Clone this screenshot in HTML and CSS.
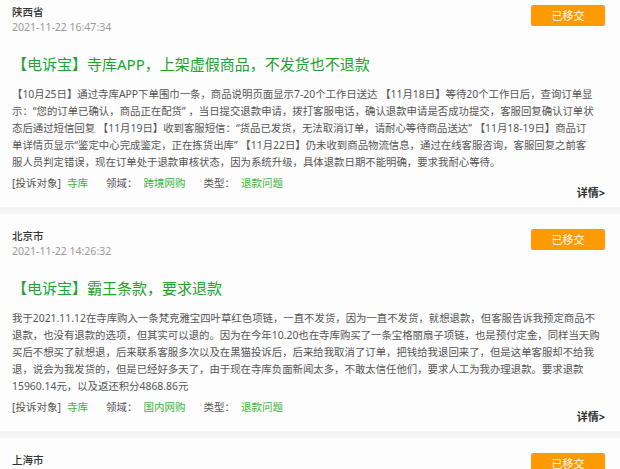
FILE: index.html
```html
<!DOCTYPE html>
<html lang="zh-CN">
<head>
<meta charset="utf-8">
<title>投诉列表</title>
<link rel="stylesheet" href="styles.css">
</head>
<body>
<div class="list">
  <div class="card">
    <div class="head">
      <div class="meta">
        <div class="loc">陕西省</div>
        <div class="date">2021-11-22 16:47:34</div>
      </div>
      <div class="btn">已移交</div>
    </div>
    <div class="title">【电诉宝】寺库APP，上架虚假商品，不发货也不退款</div>
    <div class="text">
      <span class="ln">【10月25日】通过寺库APP下单围巾一条，商品说明页面显示7-20个工作日送达 【11月18日】等待20个工作日后，查询订单显</span>
      <span class="ln">示：“您的订单已确认，商品正在配货” ，当日提交退款申请，拨打客服电话，确认退款申请是否成功提交，客服回复确认订单状</span>
      <span class="ln">态后通过短信回复 【11月19日】收到客服短信：“货品已发货，无法取消订单，请耐心等待商品送达” 【11月18-19日】商品订</span>
      <span class="ln">单详情页显示“鉴定中心完成鉴定，正在拣货出库” 【11月22日】仍未收到商品物流信息，通过在线客服咨询，客服回复之前客</span>
      <span class="ln">服人员判定错误，现在订单处于退款审核状态，因为系统升级，具体退款日期不能明确，要求我耐心等待。</span>
    </div>
    <div class="foot">
      <div class="tags"><span class="label">[投诉对象]</span><span class="val v1">寺库</span><span class="label">领域：</span><span class="val v2">跨境网购</span><span class="label">类型：</span><span class="val">退款问题</span></div>
      <div class="more">详情&gt;</div>
    </div>
  </div>
  <div class="card">
    <div class="head">
      <div class="meta">
        <div class="loc">北京市</div>
        <div class="date">2021-11-22 14:26:32</div>
      </div>
      <div class="btn">已移交</div>
    </div>
    <div class="title">【电诉宝】霸王条款，要求退款</div>
    <div class="text">
      <span class="ln">我于2021.11.12在寺库购入一条梵克雅宝四叶草红色项链，一直不发货，因为一直不发货，就想退款，但客服告诉我预定商品不</span>
      <span class="ln">退款，也没有退款的选项，但其实可以退的。因为在今年10.20也在寺库购买了一条宝格丽扇子项链，也是预付定金，同样当天购</span>
      <span class="ln">买后不想买了就想退，后来联系客服多次以及在黑猫投诉后，后来给我取消了订单，把钱给我退回来了，但是这单客服却不给我</span>
      <span class="ln">退，说会为我发货的，但是已经好多天了，由于现在寺库负面新闻太多，不敢太信任他们，要求人工为我办理退款。要求退款</span>
      <span class="ln">15960.14元，以及返还积分4868.86元</span>
    </div>
    <div class="foot">
      <div class="tags"><span class="label">[投诉对象]</span><span class="val v1">寺库</span><span class="label">领域：</span><span class="val v2">国内网购</span><span class="label">类型：</span><span class="val">退款问题</span></div>
      <div class="more">详情&gt;</div>
    </div>
  </div>
  <div class="card">
    <div class="head">
      <div class="meta">
        <div class="loc">上海市</div>
        <div class="date">2021-11-22 11:08:15</div>
      </div>
      <div class="btn">已移交</div>
    </div>
  </div>
</div>
</body>
</html>
```
FILE: styles.css
```css
html, body {
  margin: 0;
  padding: 0;
  overflow: hidden;
  background: #f4f4f4;
  font-family: "Noto Sans", "Noto Sans CJK SC", sans-serif;
}
.list {
  margin-top: -10px;
  display: flex;
  flex-direction: column;
  gap: 7px;
}
.card {
  background: #fdfdfd;
  padding: 15px 15px 6px 12px;
}
.head {
  display: flex;
  justify-content: space-between;
  align-items: flex-start;
}
.loc {
  font-size: 10.5px;
  line-height: 15px;
  color: #333;
  font-weight: 500;
}
.date {
  font-size: 10.5px;
  line-height: 15px;
  color: #9a9a9a;
}
.btn {
  width: 74px;
  height: 21px;
  line-height: 21px;
  text-align: center;
  background: #ff9a00;
  color: #fff;
  font-size: 11px;
  border-radius: 2px;
}
.title {
  margin-top: 17px;
  font-size: 15px;
  line-height: 24px;
  color: #23a12f;
}
.text {
  margin-top: 10px;
  font-size: 10.4px;
  line-height: 17px;
  color: #555;
  display: flex;
  flex-direction: column;
}
.ln {
  white-space: nowrap;
}
.foot {
  margin-top: 4px;
  display: flex;
  justify-content: space-between;
  align-items: flex-end;
}
.tags {
  font-size: 10.5px;
  line-height: 17px;
  margin-bottom: 9px;
  color: #555;
}
.label {
  color: #555;
}
.val {
  color: #3cb43c;
  margin-left: 6px;
}
.v1, .v2 {
  margin-right: 18px;
}
.more {
  font-size: 11px;
  line-height: 17px;
  font-weight: 700;
  color: #333;
}
```
